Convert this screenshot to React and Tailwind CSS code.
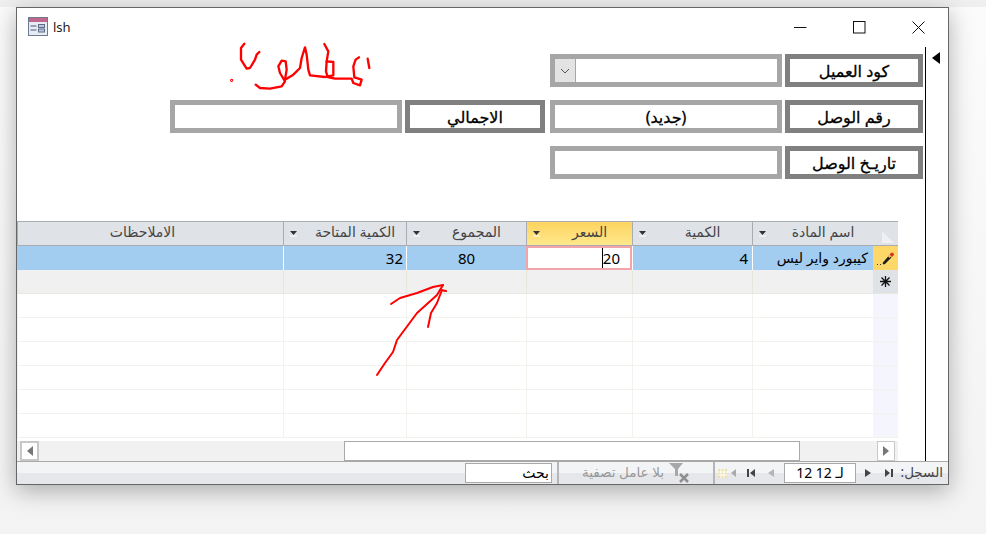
import React from "react";

const font = { fontFamily: '"Noto Sans", "DejaVu Sans", sans-serif' };

const columns = [
  { w: "w-[121px]", title: "اسم المادة", arrow: true },
  { w: "w-[120px]", title: "الكمية", arrow: true },
  { w: "w-[106px]", title: "السعر", arrow: true, active: true },
  { w: "w-[120px]", title: "المجموع", arrow: true },
  { w: "w-[123px]", title: "الكمية المتاحة", arrow: true },
  { w: "w-[266px]", title: "الاملاحظات", arrow: false },
];

function HeaderCell({ col }) {
  return (
    <div
      className={`${col.w} relative flex h-full shrink-0 items-center justify-center border-l border-[#a9adb3] text-[14px] text-[#444] ${
        col.arrow ? "pl-[20px]" : "pr-[16px]"
      } ${col.active ? "bg-gradient-to-b from-[#fdd45f] to-[#ffe88c]" : "bg-[#dfe2e7]"}`}
    >
      <span className="-mt-[3px] leading-none">{col.title}</span>
      {col.arrow && (
        <svg className="absolute left-[6px] top-[9px]" width="7" height="6" viewBox="0 0 7 6">
          <path d="M0 0H7L3.500 4Z" fill="#333" />
          <path d="M0 5H7" stroke="#fff" strokeWidth="1" />
        </svg>
      )}
    </div>
  );
}

const boxText = "text-[16px] leading-none text-black [-webkit-text-stroke:0.3px_#000]";

function LabelBox({ children, w = "w-[138px]" }) {
  return (
    <div className={`${w} flex h-[33px] shrink-0 items-center justify-center overflow-hidden border-[5px] border-[#808080] bg-white ${boxText}`}>
      {children}
    </div>
  );
}

function FieldBox({ children, combo }) {
  return (
    <div className={`flex h-[33px] w-[232px] shrink-0 items-center justify-center overflow-hidden border-[5px] border-[#a6a6a6] bg-white ${boxText}`}>
      {combo && (
        <div className="mr-auto flex h-full w-[21px] items-center justify-center border-r border-[#a6a6a6] bg-[#e3e3e3]">
          <svg width="10" height="6" viewBox="0 0 10 6">
            <path d="M1 1L5 5L9 1" fill="none" stroke="#555" strokeWidth="1" />
          </svg>
        </div>
      )}
      {children}
    </div>
  );
}

function Selector({ kind }) {
  const bg = kind === "edit" ? "bg-[#fdd768]" : kind === "new" ? "bg-[#dfe2e7]" : "bg-[#f4f5fd]";
  return (
    <div className={`flex h-full w-[25px] shrink-0 items-center justify-center ${bg}`}>
      {kind === "edit" && (
        <svg width="20" height="16" viewBox="0 0 20 16">
          <path d="M7.500 14.500L6.500 13L13 5.500L15.500 7.500L9 14Z" fill="#1c1c1c" />
          <path d="M12 6.500L13.500 5L15 6.500L13.500 8Z" fill="#f0c23c" />
          <path d="M13.500 4.500L15.500 2.500L17.500 3L18 5L16 7Z" fill="#d8342c" />
          <path d="M1 14.500H2M4 14.500H5" stroke="#333" strokeWidth="1" />
        </svg>
      )}
      {kind === "new" && (
        <svg width="13" height="13" viewBox="0 0 13 13">
          <path d="M6.500 1V12M1 6.500H12M2.500 2.500L10.500 10.500M10.500 2.500L2.500 10.500" stroke="#111" strokeWidth="1.300" />
        </svg>
      )}
    </div>
  );
}

function BlankRow() {
  return (
    <div className="flex h-[24px] border-b border-[#f3f3ee]">
      <Selector kind="blank" />
      {columns.map((c, i) => (
        <div key={i} className={`${c.w} shrink-0 border-l border-[#f3f3ee]`} />
      ))}
    </div>
  );
}

function NavArrow({ d, fill = "#444" }) {
  return (
    <svg width="10" height="10" viewBox="0 0 10 10" className="shrink-0">
      <path d={d} fill={fill} />
    </svg>
  );
}

export default function App() {
  return (
    <div dir="ltr" className="relative h-[534px] w-[986px] overflow-hidden bg-gradient-to-b from-[#fbfbfb] to-[#f3f3f3]" style={font}>
      <div className="h-[7px] bg-[#efefef]" />
      <div className="ml-[16px] flex h-[478px] w-[933px] flex-col border border-[#666] bg-white shadow-[0_6px_22px_rgba(0,0,0,0.3)]">
        {/* title bar */}
        <div className="flex h-[39px] shrink-0 items-start pl-[11px] pt-[9px]">
          <svg width="20" height="19" viewBox="0 0 20 19" className="shrink-0">
            <rect x="0.500" y="0.500" width="19" height="18" fill="#e6ebf4" stroke="#6f7a90" />
            <rect x="1" y="1" width="18" height="4" fill="#c0668c" />
            <path d="M2.500 9H8.500M2.500 13H8.500" stroke="#7d8aa3" strokeWidth="1.500" />
            <rect x="10.500" y="7.500" width="6" height="3" fill="#bcc7da" stroke="#5f6d88" />
            <rect x="10.500" y="12" width="6" height="3" fill="#bcc7da" stroke="#5f6d88" />
          </svg>
          <span className="ml-[5px] mt-[2px] text-[13px] leading-[16px] text-[#222]">lsh</span>
          <div className="ml-auto flex items-center pr-[23px] pt-[4px]">
            <svg width="13" height="13" viewBox="0 0 13 13" className="mr-[46px]"><path d="M0 6.500H12.500" stroke="#111" /></svg>
            <svg width="13" height="13" viewBox="0 0 13 13" className="mr-[46px]"><rect x="0.500" y="0.500" width="11.500" height="11.500" fill="none" stroke="#111" /></svg>
            <svg width="13" height="13" viewBox="0 0 13 13"><path d="M0.500 0.500L12.500 12.500M12.500 0.500L0.500 12.500" stroke="#111" /></svg>
          </div>
        </div>

        {/* body */}
        <div className="flex min-h-0 flex-1">
          <div dir="rtl" className="flex w-[908px] shrink-0 flex-col pr-[2px] pt-[7px]">
            <div className="flex flex-col gap-[13px]">
              <div className="flex gap-[3px]">
                <LabelBox>كود العميل</LabelBox>
                <FieldBox combo />
              </div>
              <div className="flex">
                <div className="flex gap-[3px]">
                  <LabelBox>رقم الوصل</LabelBox>
                  <FieldBox>(جديد)</FieldBox>
                </div>
                <div className="mr-[5px] flex gap-[3px]">
                  <LabelBox w="w-[140px]">الاجمالي</LabelBox>
                  <FieldBox />
                </div>
              </div>
              <div className="flex gap-[3px]">
                <LabelBox>تاريـخ الوصل</LabelBox>
                <FieldBox />
              </div>
            </div>

            {/* datasheet */}
            <div className="mr-[25px] mt-[42px] flex w-[881px] flex-col">
              <div className="flex h-[25px] border-b border-t border-[#a9adb3]">
                <div className="relative h-full w-[25px] shrink-0 bg-[#dfe2e7]">
                  <svg className="absolute left-[9px] top-[9px]" width="12" height="12" viewBox="0 0 12 12"><path d="M0 0L12 12H0Z" fill="#eef0f4" /></svg>
                </div>
                {columns.map((c, i) => <HeaderCell key={i} col={c} />)}
              </div>
              <div className="flex h-[24px] bg-[#a3cdf0] text-[15px] leading-none text-black">
                <Selector kind="edit" />
                <div className="flex w-[121px] shrink-0 items-center whitespace-nowrap border-l border-white pr-[5px] text-[14px]">كيبورد واير ليس</div>
                <div className="flex w-[120px] shrink-0 items-center justify-start border-l border-white pr-[4px]">4</div>
                <div className="flex w-[106px] shrink-0 items-center justify-start border-2 border-[#f4a3a8] bg-white pr-[10px]">
                  <span dir="ltr" className="border-l border-black leading-[20px]">20</span>
                </div>
                <div className="flex w-[120px] shrink-0 items-center justify-center border-l border-white">80</div>
                <div className="flex w-[123px] shrink-0 items-center justify-start border-l border-white pr-[3px]">32</div>
                <div className="w-[266px] shrink-0" />
              </div>
              <div className="flex h-[24px] border-b border-[#e8e8e0] bg-[#f0f0f0]">
                <Selector kind="new" />
                {columns.map((c, i) => (
                  <div key={i} className={`${c.w} shrink-0 border-l border-[#e6e6de]`} />
                ))}
              </div>
              <BlankRow />
              <BlankRow />
              <BlankRow />
              <BlankRow />
              <BlankRow />
              <BlankRow />
            </div>

            {/* horizontal scrollbar */}
            <div dir="ltr" className="mr-[25px] mt-[3px] flex h-[20px] w-[881px] items-stretch bg-[#f1f1f1]">
              <div className="ml-[3px] flex w-[19px] items-center justify-center border-2 border-[#c8c8c8] bg-white">
                <svg width="6" height="10" viewBox="0 0 6 10"><path d="M6 0V10L0 5Z" fill="#777" /></svg>
              </div>
              <div className="ml-[305px] w-[456px] border border-[#a9a9a9] bg-white" />
              <div className="ml-[77px] flex w-[18px] items-center justify-center border border-[#c8c8c8] bg-white">
                <svg width="6" height="10" viewBox="0 0 6 10"><path d="M0 0V10L6 5Z" fill="#777" /></svg>
              </div>
            </div>
          </div>

          <div className="flex-1 border-l border-black pl-[6px] pt-[5px]">
            <svg width="8" height="12" viewBox="0 0 8 12"><path d="M8 0V12L0 6Z" fill="#000" /></svg>
          </div>
        </div>

        {/* navigation bar */}
        <div dir="rtl" className="relative flex h-[23px] shrink-0 items-center border-t border-[#a9a9a9] bg-gradient-to-b from-[#f3f4f6] from-50% to-[#e6e7ea] to-50% text-[13.500px] leading-none">
          <span className="mr-[5px] w-[44px] shrink-0 text-[#444]">السجل:</span>
          <div className="mr-[1px] flex w-[18px] justify-center">
            <NavArrow d="M1 1V9L6 5ZM7 1H9V9H7Z" />
          </div>
          <div className="mr-[3px] flex w-[18px] justify-center">
            <NavArrow d="M2 1V9L8 5Z" />
          </div>
          <div dir="ltr" className="mr-[3px] flex h-[20px] w-[72px] shrink-0 items-center justify-center border border-[#a9a9a9] bg-white text-[14px] text-black">
            12 ﻟـ 12
          </div>
          <div className="mr-[4px] flex w-[18px] justify-center"><NavArrow d="M8 1V9L2 5Z" fill="#b5b5b5" /></div>
          <div className="mr-[2px] flex w-[18px] justify-center"><NavArrow d="M9 1V9L4 5ZM1 1H3V9H1Z" /></div>
          <div className="mr-[5px] flex w-[20px] items-center">
            <NavArrow d="M9 1V9L4 5Z" fill="#aaa" />
            <svg width="9" height="9" viewBox="0 0 9 9"><rect width="9" height="9" fill="#eadfae" /><path d="M3 0V9M6 0V9M0 3H9M0 6H9" stroke="#fff" /></svg>
          </div>
          <div className="mr-[2px] h-full w-[2px] shrink-0 bg-[#b4b6ba]" />
          <svg width="20" height="20" viewBox="0 0 20 20" className="mr-[24px] shrink-0">
            <path d="M0 0H14L9 6V13H6V6Z" fill="#a8a8a8" />
            <path d="M11 11L19 19M19 11L11 19" stroke="#8f8f8f" strokeWidth="2.500" />
          </svg>
          <span className="mr-[5px] w-[82px] shrink-0 whitespace-nowrap text-[#999]">بلا عامل تصفية</span>
          <div className="mr-[23px] h-full w-[2px] shrink-0 bg-[#b4b6ba]" />
          <div className="mr-[5px] flex h-[20px] w-[87px] shrink-0 items-center border border-[#a9a9a9] bg-white pr-[2px] text-[14px] text-black">بحث</div>
        </div>
      </div>

      {/* red pen annotations drawn over the window */}
      <svg className="pointer-events-none absolute left-0 top-0" width="986" height="534" viewBox="0 0 986 534" fill="none" stroke="#ff0000" strokeLinejoin="round" strokeLinecap="round">
        <g transform="translate(225 38) scale(0.3333)" strokeWidth="7">
          <polyline points="58,17 48,30 48,65 65,92 75,90 90,65 95,50 103,42" />
          <polyline points="92,140 105,150 135,152 170,145 180,130 165,105 160,85 170,68 182,70 185,95 180,125 205,110 225,90 230,60 240,28 245,50 250,95 255,112 300,117 325,112 325,72 305,70 303,100 308,117 330,122 380,122 385,135 405,142 410,125 388,118 385,85 392,65 402,58" />
          <polyline points="298,18 310,40 305,70" />
          <polyline points="428,62 433,90" />
          <circle cx="20" cy="127" r="1.500" />
        </g>
        <g strokeWidth="2">
          <polyline points="377,375 385,363 393,352 397,340 417,313 437,295 443,285" />
          <polyline points="391,304 400,298 417,293 433,287 443,285" />
          <polyline points="428,327 431,313 437,303 442,290" />
          <polyline points="440,290 446,291" />
        </g>
      </svg>
    </div>
  );
}
